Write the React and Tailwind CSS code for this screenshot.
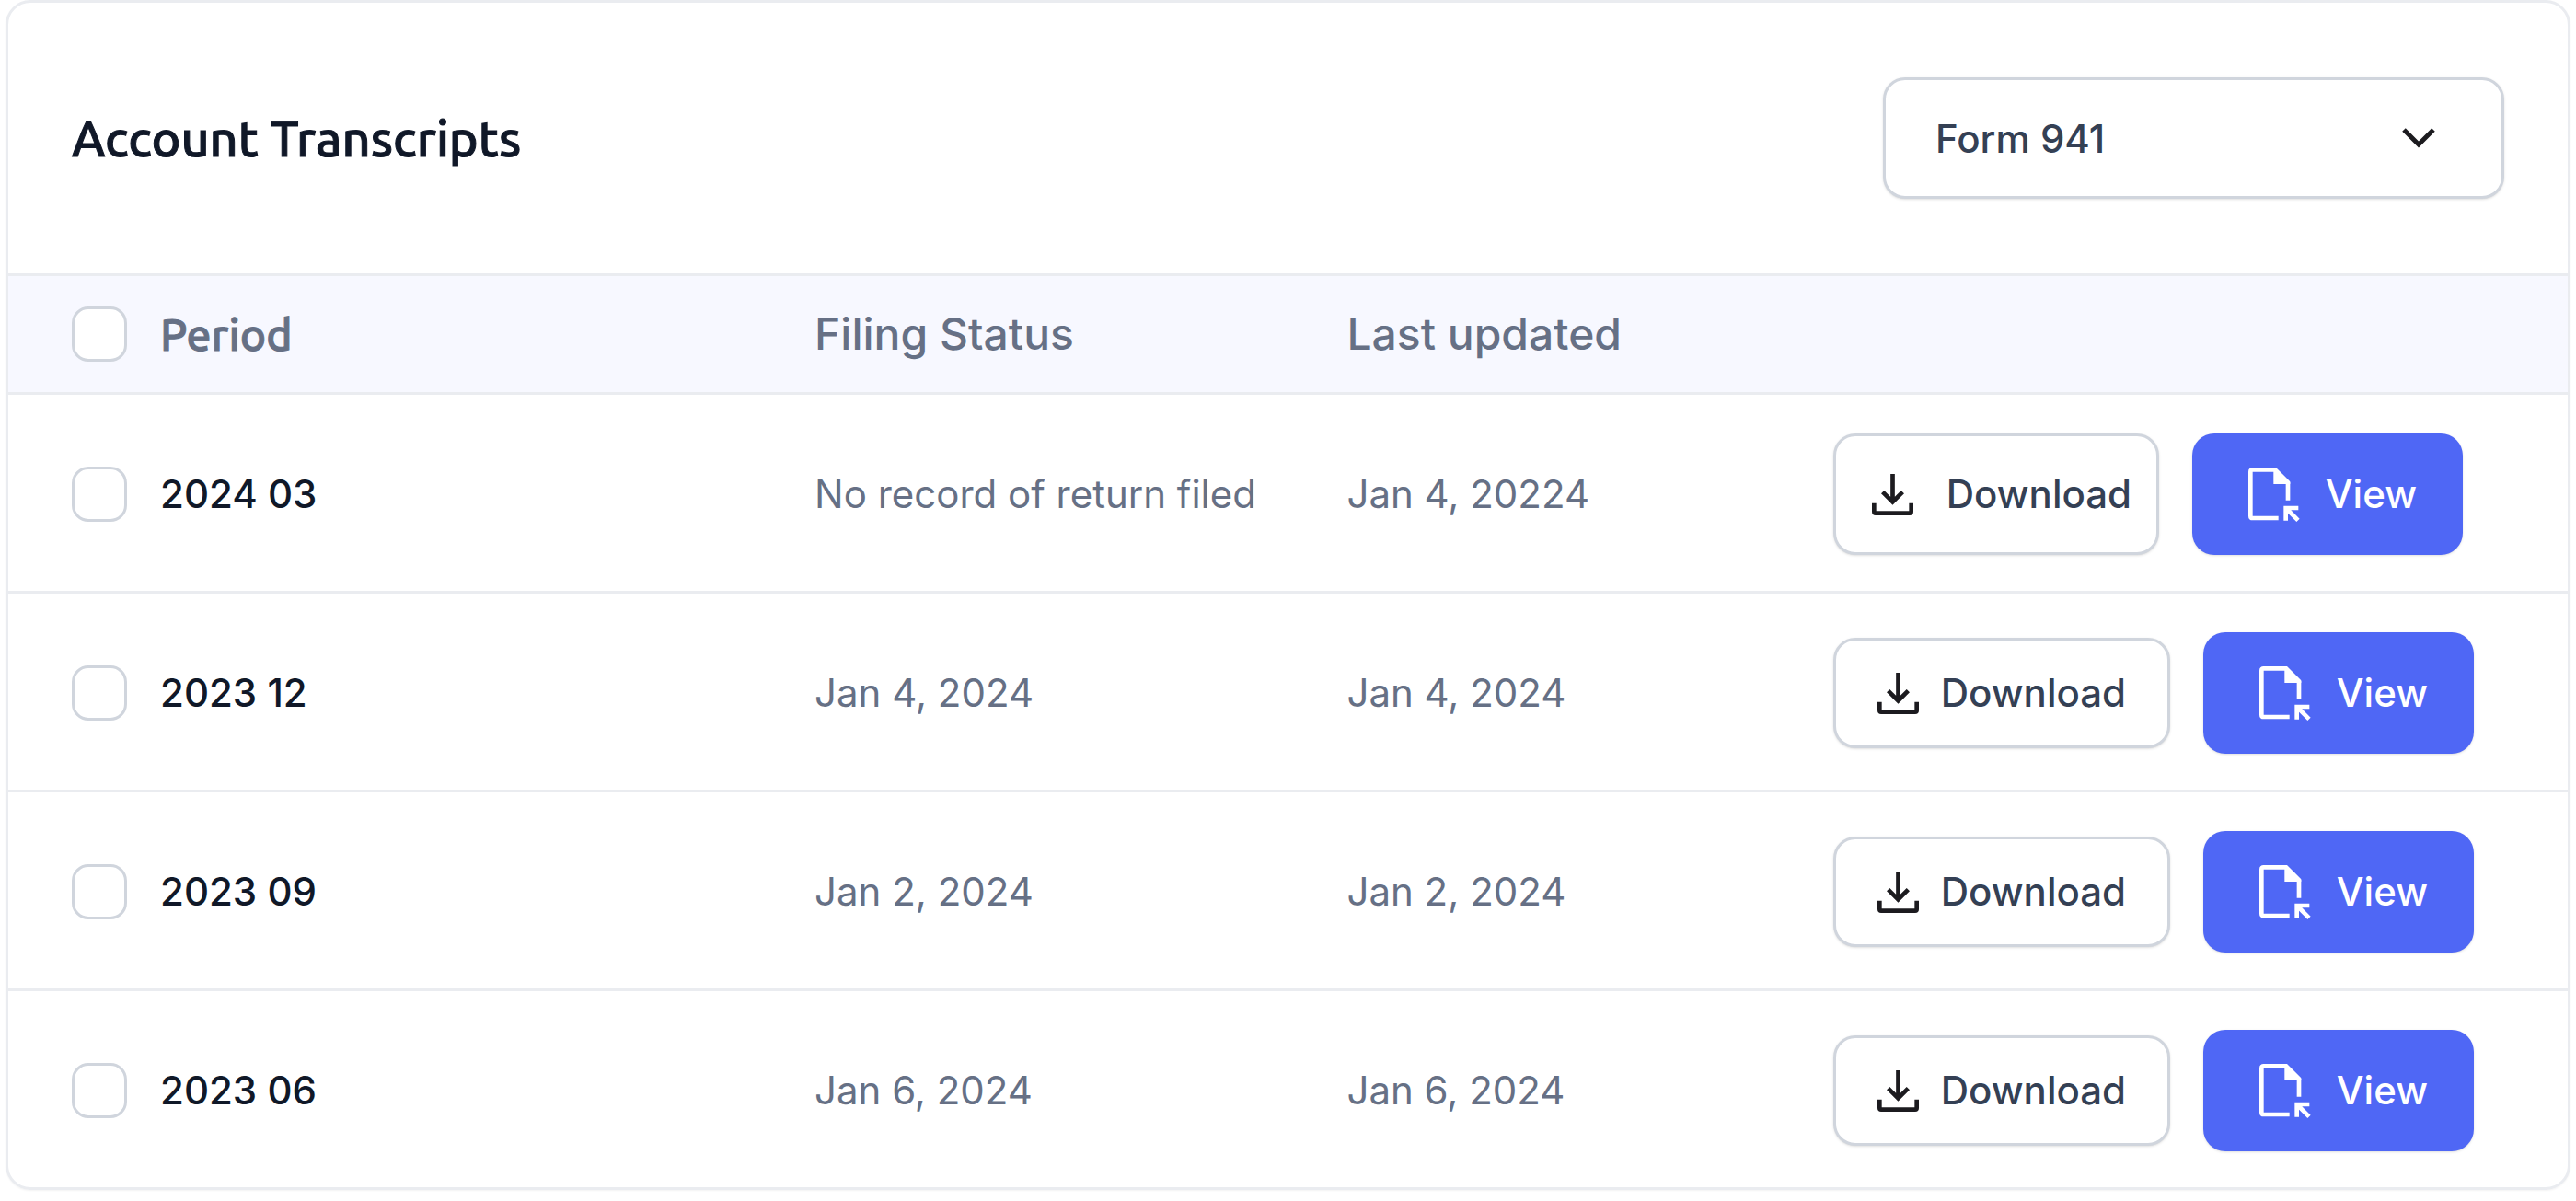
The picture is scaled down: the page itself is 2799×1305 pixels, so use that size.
import React from 'react';
import { useState } from 'react';

const ROWS = [
  { period: '2024 03', status: 'No record of return filed', updated: 'Jan 4, 20224', tall: true },
  { period: '2023 12', status: 'Jan 4, 2024', updated: 'Jan 4, 2024' },
  { period: '2023 09', status: 'Jan 2, 2024', updated: 'Jan 2, 2024' },
  { period: '2023 06', status: 'Jan 6, 2024', updated: 'Jan 6, 2024' },
];

function ChevronIcon({ className }) {
  return (
    <svg viewBox="0 0 36 22" className={className} fill="none" stroke="currentColor" strokeWidth="5" aria-hidden="true">
      <path d="M2 2l16 16L34 2" />
    </svg>
  );
}

function DownloadIcon() {
  return (
    <svg viewBox="0 0 135 135" className="size-[45px] shrink-0 text-[#1c1b1f]" fill="none" stroke="currentColor" strokeWidth="14" aria-hidden="true">
      <path d="M67.5 0v91M35 59l32.5 32.5L100 59M7 95v28q0 5 5 5h111q5 0 5-5V95" />
    </svg>
  );
}

function ViewIcon() {
  return (
    <svg viewBox="0 0 168 177" className="h-[59px] w-14 shrink-0" fill="none" stroke="currentColor" strokeWidth="14" aria-hidden="true">
      <path d="M98 165H14q-7 0-7-7V14q0-7 7-7h75M129 48v59M163 132h-41v41M122 132l40 40" />
      <path d="M82 0h8l46 46v8H82z" fill="currentColor" stroke="none" />
    </svg>
  );
}

function Checkbox({ label, checked, onChange }) {
  return (
    <input
      type="checkbox"
      aria-label={label}
      checked={checked}
      onChange={onChange}
      className="size-[60px] shrink-0 appearance-none rounded-[18px] border-3 border-[#d0d5dd] bg-white checked:border-[#4f67f5] checked:bg-[#4f67f5]"
    />
  );
}

export default function App() {
  const [form, setForm] = useState('Form 941');
  const [selected, setSelected] = useState([]);

  const allSelected = selected.length === ROWS.length;

  const toggleAll = () => {
    setSelected(allSelected ? [] : ROWS.map((r) => r.period));
  };

  const toggleRow = (period) => {
    setSelected((prev) => (prev.includes(period) ? prev.filter((p) => p !== period) : [...prev, period]));
  };

  return (
    <main className="bg-white px-1.5 pb-3 font-['Inter',sans-serif]">
      <section className="overflow-hidden rounded-[27px] border-3 border-[#eaecf0] shadow-xs">
        <header className="flex items-center justify-between border-b-3 border-[#eaecf0] px-[69px] py-[81px]">
          <h1 className="font-['Ubuntu','Noto_Sans',sans-serif] text-[54px] leading-[60px] font-medium text-[#101828] [-webkit-text-stroke:1px_currentColor]">
            Account Transcripts
          </h1>
          <div className="relative w-[675px]">
            <select
              aria-label="Form"
              value={form}
              onChange={(e) => setForm(e.target.value)}
              className="h-[132px] w-full appearance-none rounded-3xl border-3 border-[#d0d5dd] bg-white pl-[54px] text-[42px] font-medium text-[#344054] shadow-sm"
            >
              <option>Form 941</option>
            </select>
            <ChevronIcon className="pointer-events-none absolute top-[55px] right-[75px] w-9 text-[#1c1b1f]" />
          </div>
        </header>

        <table className="w-full table-fixed border-separate border-spacing-0 text-left text-[42px] leading-[60px]">
          <thead>
            <tr className="h-[129px] bg-[#f7f8ff] text-[48px] text-[#667085] [&>th]:border-b-3 [&>th]:border-[#eaecf0] [&>th]:font-medium">
              <th className="w-[31.5%] pl-[69px]">
                <div className="flex items-center gap-9">
                  <Checkbox label="Select all" checked={allSelected} onChange={toggleAll} />
                  <span className="font-['Ubuntu','Noto_Sans',sans-serif] [-webkit-text-stroke:1px_currentColor]">Period</span>
                </div>
              </th>
              <th className="w-[20.8%]">Filing Status</th>
              <th className="w-[19%]">Last updated</th>
              <th aria-label="Actions" />
            </tr>
          </thead>
          <tbody className="text-[#667085] [&>tr:not(:last-child)>td]:border-b-3 [&>tr:not(:last-child)>td]:border-[#eaecf0]">
            {ROWS.map((row) => (
              <tr key={row.period} className="h-[216px] last:h-[213px] [&>td]:pt-[3px]">
                <td className="pl-[69px]">
                  <div className="flex items-center gap-9">
                    <Checkbox
                      label={row.period}
                      checked={selected.includes(row.period)}
                      onChange={() => toggleRow(row.period)}
                    />
                    <span className="font-medium text-[#101828]">{row.period}</span>
                  </div>
                </td>
                <td>{row.status}</td>
                <td>{row.updated}</td>
                <td>
                  <div className="flex items-center gap-9 font-medium">
                    <button
                      type="button"
                      className={`flex shrink-0 items-center rounded-3xl border-3 border-[#d0d5dd] bg-white text-[#344054] shadow-sm ${
                        row.tall ? 'h-[132px] w-[354px] gap-9 pl-[39px]' : 'h-[120px] w-[366px] gap-6 pl-[45px]'
                      }`}
                    >
                      <DownloadIcon />
                      Download
                    </button>
                    <button
                      type="button"
                      className="flex h-[132px] w-[294px] shrink-0 items-center gap-7 rounded-3xl bg-[#4f67f5] pl-[61px] text-white shadow-sm"
                    >
                      <ViewIcon />
                      View
                    </button>
                  </div>
                </td>
              </tr>
            ))}
          </tbody>
        </table>
      </section>
    </main>
  );
}
